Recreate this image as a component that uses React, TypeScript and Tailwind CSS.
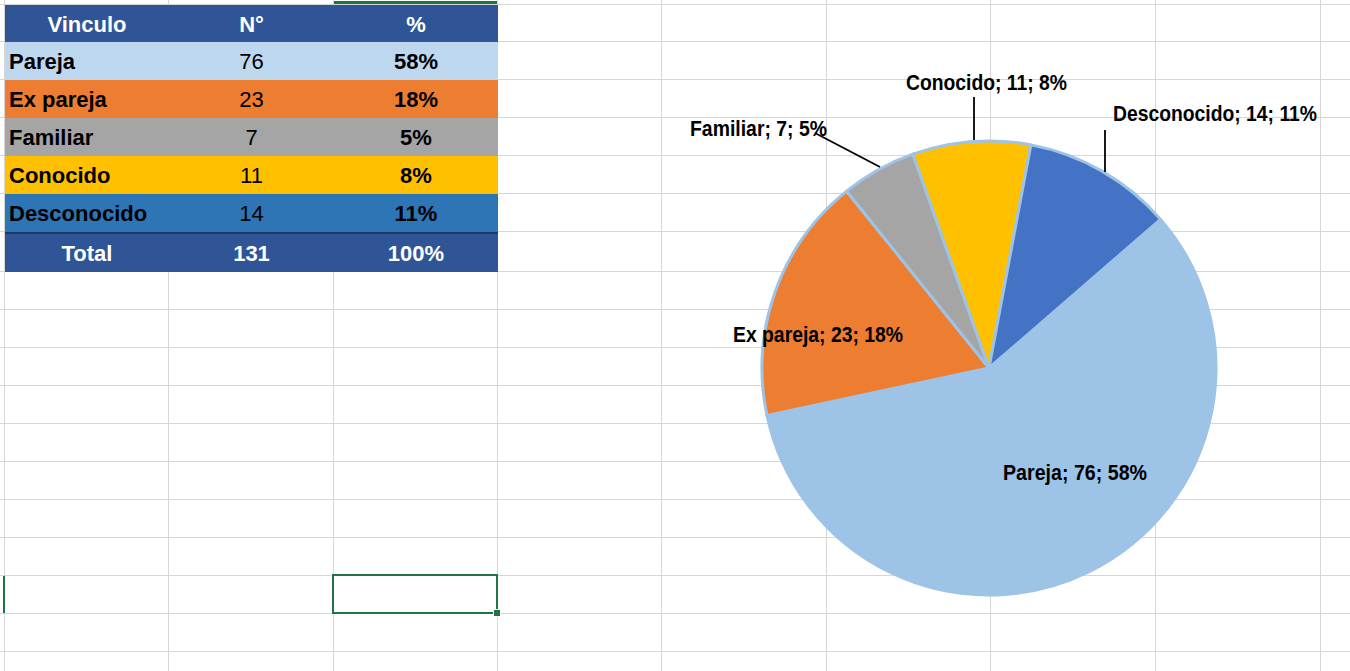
import React from 'react';

type Row = {
  bg: string;
  cells: [string, string, string];
  head?: boolean;
  total?: boolean;
};

// widths of the sheet columns, left stub first
const colClasses = [
  'w-[164px]',
  'w-[165px]',
  'w-[164px]',
  'w-[164px]',
  'w-[165px]',
  'w-[164px]',
  'w-[165px]',
  'w-[165px]',
];

const tableRows: Row[] = [
  { bg: 'bg-[#2f5597]', cells: ['Vinculo', 'N°', '%'], head: true },
  { bg: 'bg-[#bdd7ee]', cells: ['Pareja', '76', '58%'] },
  { bg: 'bg-[#ed7d31]', cells: ['Ex pareja', '23', '18%'] },
  { bg: 'bg-[#a5a5a5]', cells: ['Familiar', '7', '5%'] },
  { bg: 'bg-[#ffc000]', cells: ['Conocido', '11', '8%'] },
  { bg: 'bg-[#2e75b6]', cells: ['Desconocido', '14', '11%'] },
  { bg: 'bg-[#2f5597]', cells: ['Total', '131', '100%'], total: true },
];

const slices = [
  { label: 'Pareja', n: 76, color: '#9dc3e6' },
  { label: 'Ex pareja', n: 23, color: '#ed7d31' },
  { label: 'Familiar', n: 7, color: '#a5a5a5' },
  { label: 'Conocido', n: 11, color: '#ffc000' },
  { label: 'Desconocido', n: 14, color: '#4472c4' },
];

const labels = [
  { text: 'Conocido; 11; 8%', x: 906, y: 90, w: 161 },
  { text: 'Desconocido; 14; 11%', x: 1113, y: 121, w: 204 },
  { text: 'Familiar; 7; 5%', x: 690, y: 136, w: 137 },
  { text: 'Ex pareja; 23; 18%', x: 733, y: 342, w: 170 },
  { text: 'Pareja; 76; 58%', x: 1003, y: 480, w: 144 },
];

const Stub = ({ selected }: { selected?: boolean }) => (
  <div className="relative w-[5px] shrink-0 border-r border-b border-[#d6d6d6]">
    {selected && <div className="absolute right-[-1px] top-0 h-full w-[2px] bg-[#217346]" />}
  </div>
);

const Cell = ({ cls, selected }: { cls: string; selected?: boolean }) => (
  <div className={`relative shrink-0 border-r border-b border-[#d6d6d6] ${cls}`}>
    {selected && (
      <>
        <div className="absolute -left-[2px] -top-[2px] -right-[1px] -bottom-[1px] border-2 border-[#217346]" />
        <div className="absolute -right-[4px] -bottom-[4px] z-10 h-[8px] w-[8px] bg-[#217346] border border-white" />
      </>
    )}
  </div>
);

const PieChart = () => {
  const cx = 989;
  const cy = 368;
  const r = 227;
  const total = slices.reduce((s, d) => s + d.n, 0);
  const pt = (a: number) => {
    const rad = (a * Math.PI) / 180;
    return [cx + r * Math.sin(rad), cy - r * Math.cos(rad)];
  };
  let angle = 49.1;

  return (
    <svg
      className="pointer-events-none absolute left-0 top-0"
      width={1350}
      height={671}
      viewBox="0 0 1350 671"
    >
      {slices.map((d) => {
        const sweep = (d.n / total) * 360;
        const [x0, y0] = pt(angle);
        const [x1, y1] = pt(angle + sweep);
        angle += sweep;
        return (
          <path
            key={d.label}
            d={`M ${cx} ${cy} L ${x0} ${y0} A ${r} ${r} 0 ${sweep > 180 ? 1 : 0} 1 ${x1} ${y1} Z`}
            fill={d.color}
            stroke="#9dc3e6"
            strokeWidth={3}
            strokeLinejoin="round"
          />
        );
      })}

      {/* leader lines */}
      <line x1={815} y1={133} x2={880} y2={167} stroke="#000" strokeWidth={1.8} />
      <line x1={974} y1={97} x2={974} y2={140} stroke="#000" strokeWidth={1.8} />
      <line x1={1105} y1={130} x2={1105} y2={172} stroke="#000" strokeWidth={1.8} />

      {labels.map((l) => (
        <text
          key={l.text}
          x={l.x}
          y={l.y}
          textLength={l.w}
          lengthAdjust="spacingAndGlyphs"
          fontFamily="'Liberation Sans', Arial, sans-serif"
          fontWeight={700}
          fontSize={22}
          fill="#000"
        >
          {l.text}
        </text>
      ))}
    </svg>
  );
};

const App = () => {
  const emptyRows = Array.from({ length: 11 }, (_, i) => i);

  return (
    <div className="relative h-[671px] w-[1350px] overflow-hidden bg-white font-['Liberation_Sans',Arial,sans-serif]">
      {/* top edge row */}
      <div className="flex h-[5px]">
        <Stub />
        {colClasses.map((c, i) => (
          <div key={i} className={`shrink-0 border-r border-b border-[#d6d6d6] ${c}`}>
            {i === 2 && <div className="mt-[1px] h-[3px] bg-[#217346]" />}
          </div>
        ))}
        <div className="flex-1 border-b border-[#d6d6d6]" />
      </div>

      {/* data table */}
      {tableRows.map((row, ri) => (
        <div
          key={ri}
          className={`flex ${ri === 0 ? 'h-[37px]' : row.total ? 'h-[40px]' : 'h-[38px]'}`}
        >
          <Stub />
          <div
            className={`flex w-[493px] shrink-0 text-[22px] ${row.bg} ${
              row.total ? 'border-t-2 border-[#1f3864]' : ''
            } ${row.head || row.total ? 'text-white' : 'text-black'}`}
          >
            <div
              className={`flex w-[164px] items-center pt-[1px] font-bold ${
                row.head || row.total ? 'justify-center' : 'pl-[4px]'
              }`}
            >
              {row.cells[0]}
            </div>
            <div
              className={`flex w-[165px] items-center justify-center pt-[1px] ${
                row.head || row.total ? 'font-bold' : 'font-normal'
              }`}
            >
              {row.cells[1]}
            </div>
            <div className="flex w-[164px] items-center justify-center pt-[1px] font-bold">
              {row.cells[2]}
            </div>
          </div>
          {colClasses.slice(3).map((c, i) => (
            <Cell key={i} cls={c} />
          ))}
          <div className="flex-1 border-b border-[#d6d6d6]" />
        </div>
      ))}

      {/* empty sheet */}
      {emptyRows.map((r) => (
        <div key={r} className="flex h-[38px]">
          <Stub selected={r === 8} />
          {colClasses.map((c, i) => (
            <Cell key={i} cls={c} selected={r === 8 && i === 2} />
          ))}
          <div className="flex-1 border-b border-[#d6d6d6]" />
        </div>
      ))}

      <PieChart />
    </div>
  );
};

export default App;
